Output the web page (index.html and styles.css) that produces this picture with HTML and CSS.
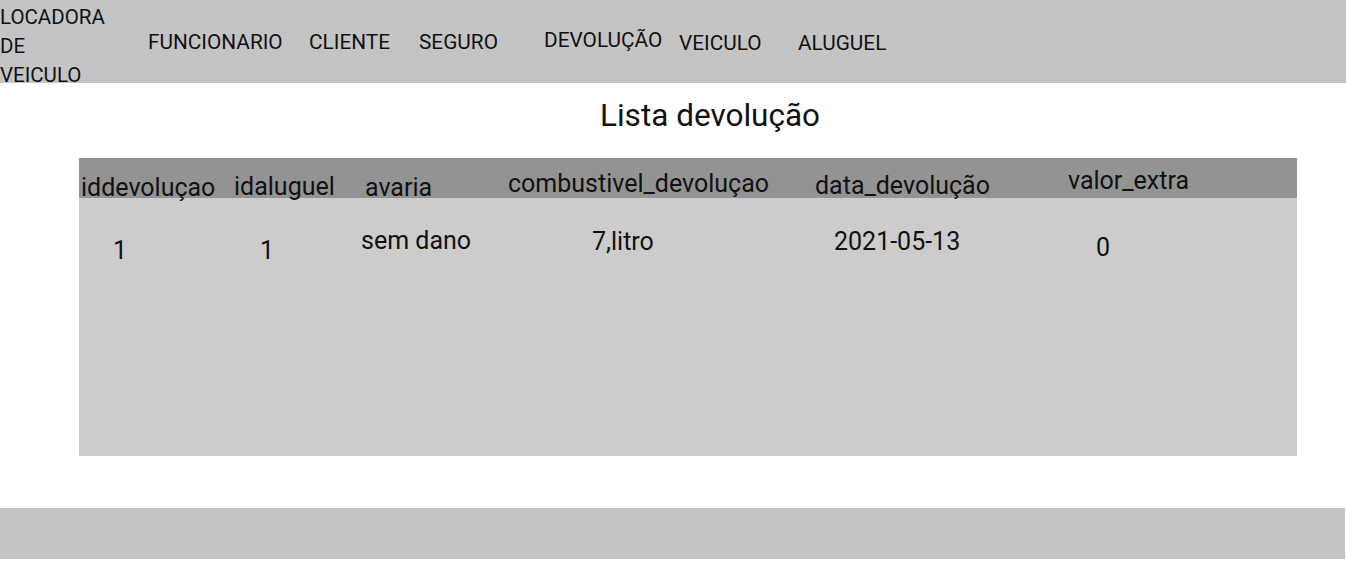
FILE: index.html
```html
<!DOCTYPE html>
<html lang="pt">
<head>
<meta charset="utf-8">
<link rel="stylesheet" href="styles.css">
</head>
<body>
<header class="topbar">
  <div class="brand">LOCADORA DE VEICULO</div>
  <nav class="nav">
    <a class="nav-item n-func">FUNCIONARIO</a>
    <a class="nav-item n-cli">CLIENTE</a>
    <a class="nav-item n-seg">SEGURO</a>
    <a class="nav-item n-dev">DEVOLUÇÃO</a>
    <a class="nav-item n-vei">VEICULO</a>
    <a class="nav-item n-alu">ALUGUEL</a>
  </nav>
</header>
<main class="content">
  <h1 class="title">Lista devolução</h1>
  <section class="table">
    <div class="row head">
      <div class="c h1">iddevoluçao</div>
      <div class="c h2">idaluguel</div>
      <div class="c h3">avaria</div>
      <div class="c h4">combustivel_devoluçao</div>
      <div class="c h5">data_devolução</div>
      <div class="c h6">valor_extra</div>
    </div>
    <div class="row body">
      <div class="c b1">1</div>
      <div class="c b2">1</div>
      <div class="c b3">sem dano</div>
      <div class="c b4">7,litro</div>
      <div class="c b5">2021-05-13</div>
      <div class="c b6">0</div>
    </div>
  </section>
</main>
<footer class="footer"></footer>
</body>
</html>
```
FILE: styles.css
```css
* { box-sizing: border-box; }
body {
  margin: 0;
  font-family: Roboto, "Liberation Sans", sans-serif;
  color: #111;
  background: #fff;
}
.topbar {
  background: #c4c4c4;
  height: 83px;
  display: grid;
  grid-template-columns: 148px 1fr;
}
.brand {
  font-size: 20.5px;
  line-height: 29px;
  width: 108px;
  padding-top: 3px;
}
.nav {
  display: grid;
  grid-template-columns: 161px 110px 125px 135px 119px auto;
  align-items: start;
}
.nav-item {
  font-size: 20.8px;
  line-height: 24px;
  color: #111;
  text-decoration: none;
  white-space: nowrap;
  padding-top: 30px;
}
.n-dev { padding-top: 28px; }
.n-vei, .n-alu { padding-top: 31px; }

.content {
  padding: 0 48px 0 79px;
}
.title {
  margin: 0;
  font-weight: 400;
  font-size: 31.5px;
  line-height: 36px;
  padding-top: 15px;
  padding-left: 521px;
  height: 75px;
}
.table {
  width: 1218px;
}
.row {
  display: grid;
  grid-template-columns: 153px 129px 145px 307px 253px auto;
  font-size: 25px;
  line-height: 28px;
}
.head {
  background: #939393;
  height: 40px;
}
.body {
  background: #cccccc;
  height: 258px;
}
.c { white-space: nowrap; }
.h1 { padding: 16px 0 0 2px; }
.h2 { padding: 15px 0 0 2px; }
.h3 { padding: 16px 0 0 4px; }
.h4 { padding: 12px 0 0 2px; }
.h5 { padding: 14px 0 0 2px; }
.h6 { padding: 9px 0 0 2px; }
.b1 { padding: 39px 0 0 34px; }
.b2 { padding: 39px 0 0 28px; }
.b3 { padding: 29px 0 0 0; }
.b4 { padding: 30px 0 0 86px; }
.b5 { padding: 30px 0 0 21px; }
.b6 { padding: 36px 0 0 30px; }

.footer {
  margin-top: 52px;
  background: #c4c4c4;
  height: 51px;
  width: 1345px;
}
```
